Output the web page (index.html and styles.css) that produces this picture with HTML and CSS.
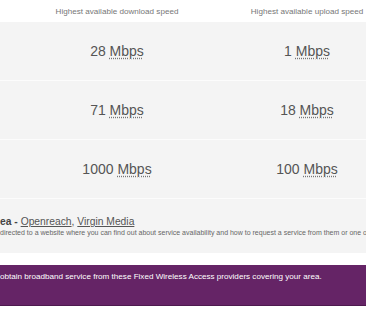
FILE: index.html
```html
<!DOCTYPE html>
<html lang="en">
<head>
    <meta charset="UTF-8">
    <meta name="viewport" content="width=device-width, initial-scale=1.0">
    <title>Broadband availability</title>
    <link rel="stylesheet" href="styles.css">
</head>
<body>
    <div class="speeds">
        <div class="speeds-head">
            <span>Highest available download speed</span>
            <span>Highest available upload speed</span>
        </div>
        <div class="speed-row">
            <div class="cell">28 <abbr title="Megabits per second">Mbps</abbr></div>
            <div class="cell">1 <abbr title="Megabits per second">Mbps</abbr></div>
        </div>
        <div class="speed-row">
            <div class="cell">71 <abbr title="Megabits per second">Mbps</abbr></div>
            <div class="cell">18 <abbr title="Megabits per second">Mbps</abbr></div>
        </div>
        <div class="speed-row">
            <div class="cell">1000 <abbr title="Megabits per second">Mbps</abbr></div>
            <div class="cell">100 <abbr title="Megabits per second">Mbps</abbr></div>
        </div>
    </div>

    <div class="providers">
        <p class="providers-line"><strong>ea -</strong> <a href="#">Openreach</a>, <a href="#">Virgin Media</a></p>
        <p class="note">directed to a website where you can find out about service availability and how to request a service from them or one o</p>
    </div>

    <div class="fwa">
        <p>obtain broadband service from these Fixed Wireless Access providers covering your area.</p>
    </div>
</body>
</html>
```

FILE: styles.css
```css
body {
    margin: 0;
    font-family: "Liberation Sans", Arial, sans-serif;
    color: #555;
    background: #fff;
    overflow: hidden;
}
.speeds-head {
    display: grid;
    grid-template-columns: 190px 190px;
    padding-left: 22px;
    height: 22px;
    align-items: center;
    font-size: 8.1px;
    color: #777;
    white-space: nowrap;
}
.speeds-head span {
    text-align: center;
}
.speed-row {
    display: grid;
    grid-template-columns: 190px 190px;
    padding-left: 22px;
    height: 58px;
    align-items: center;
    background: #f4f4f4;
    border-bottom: 1px solid #fcfcfc;
    font-size: 14px;
}
.cell {
    text-align: center;
    white-space: nowrap;
}
abbr {
    text-decoration: underline dotted #777;
    text-underline-offset: 2px;
}
.providers {
    background: #f4f4f4;
    height: 54px;
    padding-top: 16px;
    box-sizing: border-box;
    white-space: nowrap;
    overflow: hidden;
}
.providers p {
    margin: 0;
}
.providers-line {
    font-size: 10.3px;
    line-height: 13px;
}
.providers-line strong {
    color: #444;
}
.providers-line a {
    color: #555;
}
.note {
    font-size: 7px;
    line-height: 10px;
    color: #666;
}
.fwa {
    margin-top: 12px;
    height: 40px;
    background: #652466;
    border-bottom: 1px solid #4e1a4f;
    color: #fff;
    white-space: nowrap;
}
.fwa p {
    margin: 0;
    padding-top: 7px;
    font-size: 8.1px;
}
```
